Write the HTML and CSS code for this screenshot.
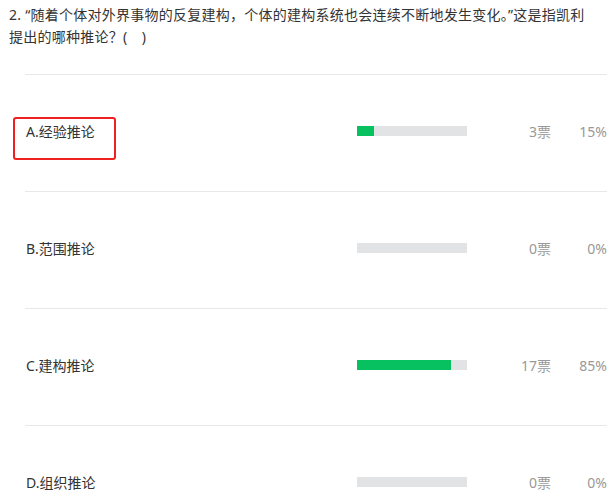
FILE: index.html
```html
<!DOCTYPE html>
<html lang="zh-CN">
  <head>
    <meta charset="UTF-8" />
    <meta name="viewport" content="width=device-width, initial-scale=1.0" />
    <title>投票结果</title>
    <link rel="stylesheet" href="styles.css">
  </head>
  <body>
    <div class="question">
      <p class="question-title">
        2. “随着个体对外界事物的反复建构，个体的建构系统也会连续不断地发生变化。”这是指凯利提出的哪种推论？(　)
      </p>

      <div class="options">
        <div class="option">
          <div class="option-label">A.经验推论</div>
          <div class="bar"><div class="bar-fill" style="width: 15%"></div></div>
          <div class="votes">3票</div>
          <div class="percent">15%</div>
          <span class="mark"></span>
        </div>

        <div class="option">
          <div class="option-label">B.范围推论</div>
          <div class="bar"><div class="bar-fill" style="width: 0%"></div></div>
          <div class="votes">0票</div>
          <div class="percent">0%</div>
        </div>

        <div class="option">
          <div class="option-label">C.建构推论</div>
          <div class="bar"><div class="bar-fill" style="width: 85%"></div></div>
          <div class="votes">17票</div>
          <div class="percent">85%</div>
        </div>

        <div class="option">
          <div class="option-label">D.组织推论</div>
          <div class="bar"><div class="bar-fill" style="width: 0%"></div></div>
          <div class="votes">0票</div>
          <div class="percent">0%</div>
        </div>
      </div>
    </div>
  </body>
</html>
```

FILE: styles.css
```css
* {
  margin: 0;
  padding: 0;
  box-sizing: border-box;
}

body {
  background: #fff;
  color: #333;
  font-family: "Noto Sans", "Noto Sans CJK SC", sans-serif;
  font-size: 14px;
}

.question {
  padding: 4px 8px 0 9px;
}

.question-title {
  width: 586px;
  line-height: 22px;
  letter-spacing: 0.25px;
}

.options {
  margin: 26px 0 0 16px;
  width: 582px;
}

.option {
  position: relative;
  display: grid;
  grid-template-columns: 332px 110px 84px 56px;
  align-items: center;
  height: 117px;
  padding-bottom: 4px;
  border-top: 1px solid #e8e8e8;
}

.option-label {
  padding-left: 1px;
  color: #333;
}

.bar {
  height: 10px;
  background: #e2e3e5;
}

.bar-fill {
  height: 100%;
  background: #07c160;
}

.votes,
.percent {
  text-align: right;
  color: #999;
}

/* highlight box around the chosen answer */
.mark {
  position: absolute;
  left: -12px;
  top: 42px;
  width: 103px;
  height: 43px;
  border: 2px solid #ee2020;
  border-radius: 3px;
}
```
